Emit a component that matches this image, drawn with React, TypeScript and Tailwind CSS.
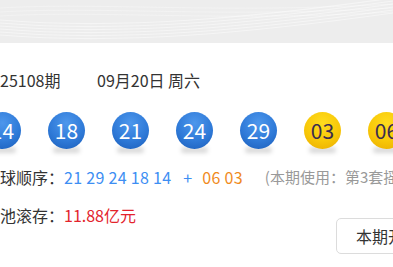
const FONT = { fontFamily: '"Noto Sans CJK SC", "Noto Sans", sans-serif' };

const reds = ["14", "18", "21", "24", "29"];
const blues = ["03", "06"];

function Ball({ num, kind }: { num: string; kind: "front" | "back" }) {
  const front = kind === "front";
  return (
    <div className="relative w-[37px] h-[37px] shrink-0">
      <div className="absolute left-[5px] right-[5px] bottom-[-4px] h-[6px] rounded-full bg-black/15 blur-[2px]" />
      <div
        className={
          front
            ? "relative w-full h-full rounded-full flex items-center justify-center text-white text-[21px] bg-[radial-gradient(circle_at_50%_30%,#4d97ec_0%,#2f7ad8_55%,#1a5cb8_100%)]"
            : "relative w-full h-full rounded-full flex items-center justify-center text-[#3b2d4f] text-[21px] bg-[radial-gradient(circle_at_50%_30%,#ffdc1e_0%,#f8c808_55%,#e9aa00_100%)]"
        }
      >
        {num}
      </div>
    </div>
  );
}

function Waves() {
  return (
    <svg className="absolute inset-0 w-full h-full" viewBox="0 0 393 43" preserveAspectRatio="none">
      {[0, 3, 6, 9, 12, 15].map((o) => (
        <path
          key={o}
          d={`M0 ${20 + o} C 120 ${30 + o}, 250 ${18 + o}, 393 ${-2 + o}`}
          fill="none"
          stroke="#ffffff"
          strokeOpacity={0.45}
          strokeWidth={1.2}
        />
      ))}
      {[0, 4, 8].map((o) => (
        <path
          key={"b" + o}
          d={`M0 ${8 + o} C 100 ${2 + o}, 220 ${14 + o}, 393 ${4 + o}`}
          fill="none"
          stroke="#ffffff"
          strokeOpacity={0.3}
          strokeWidth={1}
        />
      ))}
    </svg>
  );
}

export default function App() {
  return (
    <div className="w-[393px] h-[267px] overflow-hidden bg-white text-[16px] text-[#333]" style={FONT}>
      <div className="relative h-[43px] bg-[#ededed] overflow-hidden">
        <Waves />
      </div>
      <div className="ml-[-16px] w-[480px]">
        <div className="flex items-center h-[24px] mt-[25px] leading-none">
          <span className="w-[113px]">第25108期</span>
          <span>09月20日 周六</span>
        </div>
        <div className="flex gap-[27px] mt-[20px]">
          {reds.map((n) => (
            <Ball key={n} num={n} kind="front" />
          ))}
          {blues.map((n) => (
            <Ball key={n} num={n} kind="back" />
          ))}
        </div>
        <div className="flex items-center h-[24px] mt-[16px] whitespace-nowrap">
          <span className="w-[80px]">出球顺序：</span>
          <span className="text-[#3d8ef3] tracking-[0.3px]">21 29 24 18 14</span>
          <span className="text-[#3d8ef3] ml-[12px]">+</span>
          <span className="text-[#f08a1c] ml-[10px] tracking-[0.3px]">06 03</span>
          <span className="text-[#999] ml-[22px] text-[15px]">(本期使用：第3套摇奖机)</span>
        </div>
        <div className="flex items-start mt-[14px] whitespace-nowrap">
          <div className="flex items-center h-[24px]">
            <span className="w-[80px]">奖池滚存：</span>
            <span className="text-[#e3232c]">11.88亿元</span>
          </div>
          <div className="ml-[200px] mt-[15px] h-[36px] px-[19px] flex items-center border border-[#dcdcdc] rounded-[5px] text-[#333]">
            本期开奖公告
          </div>
        </div>
      </div>
    </div>
  );
}
